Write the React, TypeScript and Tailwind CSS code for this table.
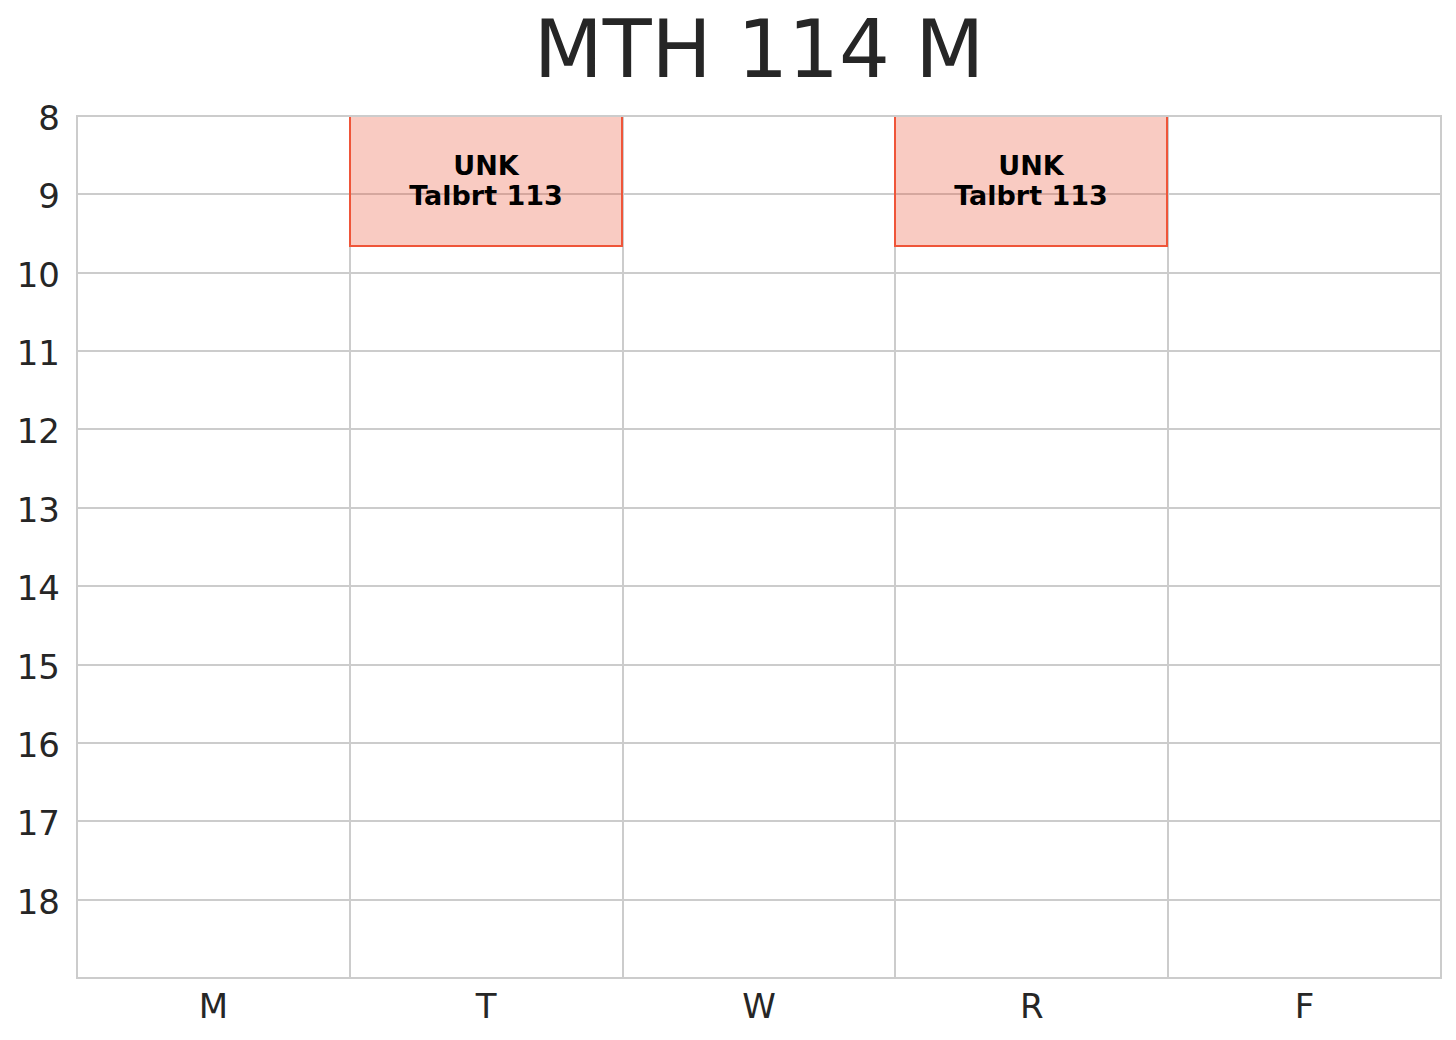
const hours = [8, 9, 10, 11, 12, 13, 14, 15, 16, 17, 18];
const days = ["M", "T", "W", "R", "F"];

const meetings = [
  { day: 1, left: "left-[271px]", title: "UNK", room: "Talbrt 113" },
  { day: 3, left: "left-[816px]", title: "UNK", room: "Talbrt 113" },
];

export default function App() {
  return (
    <div className="w-[1456px] h-[1040px] bg-white text-[#262626] font-['DejaVu_Sans',sans-serif] flex flex-col">
      {/* title */}
      <div className="flex h-[115px]">
        <div className="w-[76px]" />
        <div className="w-[1366px] pt-[10px] text-center text-[80px] leading-none">MTH 114 M</div>
      </div>

      {/* plot */}
      <div className="flex">
        <div className="w-[76px] h-[864px] pr-[16px] py-[2px] grid grid-rows-11 gap-[2px]">
          {hours.map((h) => (
            <div key={h} className="text-right text-[34px] leading-none">
              <span className="block -mt-[16px]">{h}</span>
            </div>
          ))}
        </div>

        <div className="relative w-[1366px] h-[864px] border-2 border-[#cccccc] bg-[#cccccc]">
          <div className="grid grid-cols-5 grid-rows-11 gap-[2px] h-full">
            {hours.flatMap((h) => days.map((d) => <div key={`${h}-${d}`} className="bg-white" />))}
          </div>

          {meetings.map((m) => (
            <div
              key={m.day}
              className={`absolute top-0 ${m.left} w-[274px] h-[130px] bg-[#eb5236]/30 border-x-2 border-b-2 border-[#ef5539] flex flex-col items-center justify-center text-black font-bold text-[27px] leading-[30px]`}
            >
              <span>{m.title}</span>
              <span>{m.room}</span>
            </div>
          ))}
        </div>
      </div>

      {/* day labels */}
      <div className="flex mt-[10px]">
        <div className="w-[76px]" />
        <div className="w-[1366px] px-[2px] grid grid-cols-5 gap-[2px] text-[34px] leading-none text-center">
          {days.map((d) => (
            <div key={d}>{d}</div>
          ))}
        </div>
      </div>
    </div>
  );
}
